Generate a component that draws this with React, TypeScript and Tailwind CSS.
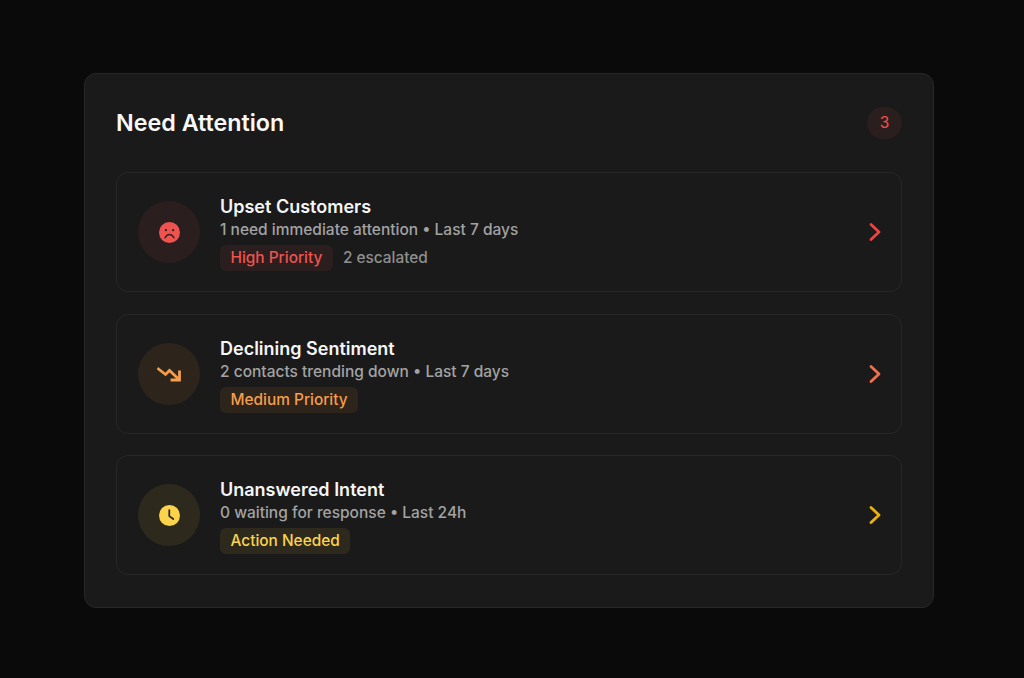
import type { ReactNode } from 'react'

interface AttentionItem {
  title: string
  detail: string
  tag: string
  extra?: string
  iconBg: string
  tagClass: string
  chevron: string
  icon: ReactNode
}

const SadFace = () => (
  <svg width="21" height="21" viewBox="0 0 20 20">
    <circle cx="10" cy="10" r="10" fill="#ef5350" />
    <circle cx="6.600" cy="7.800" r="1.100" fill="#3a1f1f" />
    <circle cx="13.400" cy="7.800" r="1.100" fill="#3a1f1f" />
    <path d="M5.800 15c1-2.200 2.500-3.200 4.200-3.200s3.200 1 4.200 3.200" fill="none" stroke="#3a1f1f" strokeWidth="1.400" strokeLinecap="round" />
  </svg>
)

const TrendDown = () => (
  <svg width="24" height="16" viewBox="0 0 24 16" fill="none" stroke="#f59e4c" strokeWidth="2.800" strokeLinecap="square">
    <path d="M1.500 3 L8.500 8.500 L12.500 4.500 L21.500 13" />
    <path d="M22.500 6 V14 H15" />
  </svg>
)

const ClockFill = () => (
  <svg width="21" height="21" viewBox="0 0 20 20">
    <circle cx="10" cy="10" r="10" fill="#fcd34d" />
    <path d="M9.800 4.800 V10.600 L13.600 13.400" fill="none" stroke="#2a2618" strokeWidth="1.700" strokeLinecap="round" strokeLinejoin="round" />
  </svg>
)

const ITEMS: AttentionItem[] = [
  {
    title: 'Upset Customers',
    detail: '1 need immediate attention • Last 7 days',
    tag: 'High Priority',
    extra: '2 escalated',
    iconBg: 'bg-[#2a1e1e]',
    tagClass: 'bg-[#2a1e1e] text-[#ef5350]',
    chevron: '#ef4444',
    icon: <SadFace />,
  },
  {
    title: 'Declining Sentiment',
    detail: '2 contacts trending down • Last 7 days',
    tag: 'Medium Priority',
    iconBg: 'bg-[#2d241b]',
    tagClass: 'bg-[#2d241b] text-[#f59e4c]',
    chevron: '#f2704a',
    icon: <TrendDown />,
  },
  {
    title: 'Unanswered Intent',
    detail: '0 waiting for response • Last 24h',
    tag: 'Action Needed',
    iconBg: 'bg-[#2d291c]',
    tagClass: 'bg-[#2d291c] text-[#fcd34d]',
    chevron: '#eab308',
    icon: <ClockFill />,
  },
]

function AttentionRow({ item }: { item: AttentionItem }) {
  return (
    <div className="flex h-[120px] items-center rounded-xl border border-[#272727] pl-[21px] pr-[19px]">
      <div className={`flex h-[62px] w-[62px] shrink-0 items-center justify-center rounded-full ${item.iconBg}`}>
        {item.icon}
      </div>
      <div className="ml-[20px] flex-1 pt-[2px]">
        <div className="text-[18px] leading-[24px] font-semibold text-[#f5f5f5]">{item.title}</div>
        <div className="text-[15.500px] leading-[22px] font-medium text-[#a3a3a3]">{item.detail}</div>
        <div className="mt-[4px] flex items-center gap-[10px]">
          <span className={`rounded-md px-[10.500px] text-[15.400px] leading-[26px] font-medium ${item.tagClass}`}>
            {item.tag}
          </span>
          {item.extra && <span className="text-[15.400px] font-medium text-[#8f8f8f]">{item.extra}</span>}
        </div>
      </div>
      <svg width="14" height="20" viewBox="0 0 14 20" fill="none" stroke={item.chevron} strokeWidth="2.800" strokeLinecap="round" strokeLinejoin="round">
        <path d="M3 2.500 L11 10 L3 17.500" />
      </svg>
    </div>
  )
}

export default function App() {
  return (
    <div className="flex h-[678px] w-full items-start justify-center bg-[#0a0a0a] pr-[6px] pt-[72.500px] font-['Inter',sans-serif]">
      <div className="w-[850px] rounded-xl border border-[#272727] bg-[#1a1a1a] px-[31px] pt-[33.500px] pb-[31.500px]">
        <div className="flex h-[32px] items-center justify-between">
          <h2 className="text-[23.300px] font-semibold text-[#f8f8f8]">Need Attention</h2>
          <span className="flex h-[32px] w-[35px] items-center justify-center rounded-full bg-[#2a1e1e] text-[15.500px] font-normal text-[#ef5350]">
            3
          </span>
        </div>
        <div className="mt-[33px] flex flex-col gap-[21.700px]">
          {ITEMS.map((item) => (
            <AttentionRow key={item.title} item={item} />
          ))}
        </div>
      </div>
    </div>
  )
}
